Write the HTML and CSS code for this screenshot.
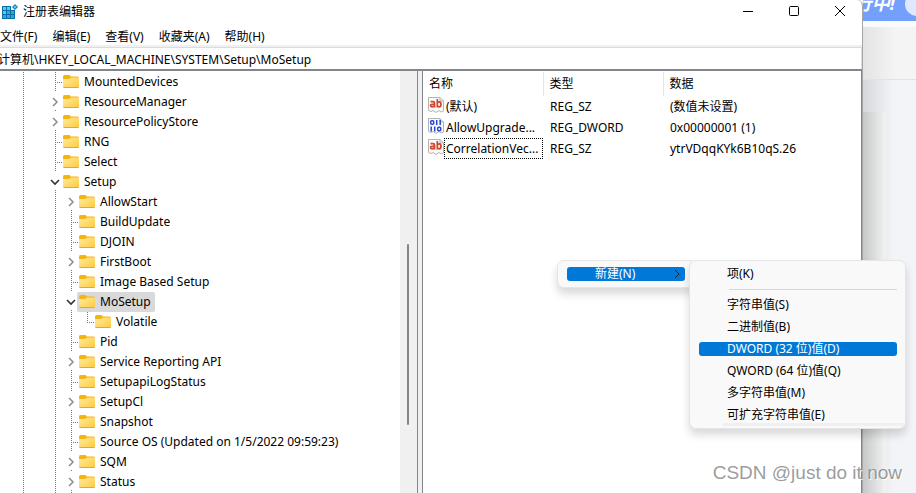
FILE: index.html
```html
<!DOCTYPE html>
<html lang="zh-CN">
<head>
    <meta charset="UTF-8">
    <meta name="viewport" content="width=device-width, initial-scale=1.0">
    <title>注册表编辑器</title>
    <link rel="stylesheet" href="styles.css">
</head>
<body>

    <!-- Shared icons -->
    <svg class="icon-defs" aria-hidden="true">
        <defs>
            <linearGradient id="folder-fill" x1="0" y1="0" x2="1" y2="1">
                <stop offset="0" stop-color="#ffe9a0"/>
                <stop offset="1" stop-color="#ffcb3d"/>
            </linearGradient>
            <symbol id="folder" viewBox="0 0 16 14">
                <path d="M0 1.500 Q0 0 1.500 0 H6 Q7 0 7.500 1 L8 1.500 H14.500 Q16 1.500 16 3 V6 H0 Z" fill="#f5b50f"/>
                <path d="M0 4 H6 L8 2.500 H15 Q16 2.500 16 3.500 V11.500 Q16 13 14.500 13 H1.500 Q0 13 0 11.500 Z" fill="url(#folder-fill)"/>
                <path d="M.5 12.500 H15.500" stroke="#eda912" stroke-width="1"/>
            </symbol>
            <symbol id="closed" viewBox="0 0 8 10">
                <path d="M2 1 L6 5 L2 9" fill="none" stroke="#8c8c8c" stroke-width="1.500"/>
            </symbol>
            <symbol id="opened" viewBox="0 0 10 8">
                <path d="M1 2 L5 6 L9 2" fill="none" stroke="#333" stroke-width="1.600"/>
            </symbol>
            <symbol id="sheet" viewBox="0 0 16 16">
                <path d="M.5 .5 H12 L15.500 4 V14 L13 15 L11 13.500 L8 15.500 L5 13.500 L3 14.500 L.5 13.500 Z" fill="#fafafa" stroke="#b4b4b4"/>
                <path d="M12 .5 V4 H15.500" fill="none" stroke="#b4b4b4"/>
            </symbol>
            <symbol id="string" viewBox="0 0 16 16">
                <use href="#sheet"/>
                <g fill="none" stroke="#d1472b" stroke-width="1.700">
                    <path d="M2.500 4.700 H5 Q6.500 4.700 6.500 6 V10.500 M6.500 7.300 H4 Q2.500 7.300 2.500 8.500 Q2.500 9.800 4 9.800 Q5.500 9.800 6.500 8.700"/>
                    <path d="M9.300 2 V10.500 M9.300 6 Q9.800 4.800 11.200 4.800 Q13 4.800 13 7.300 Q13 9.800 11.200 9.800 Q9.800 9.800 9.300 8.700"/>
                </g>
            </symbol>
            <symbol id="binary" viewBox="0 0 16 16">
                <use href="#sheet"/>
                <g fill="none" stroke="#2747d8" stroke-width="1.500">
                    <rect x="2.700" y="2.700" width="3" height="3.600" rx="1"/>
                    <path d="M8.700 2 V7 M12.200 2 V7 M3.200 8.500 V13.500 M6.700 8.500 V13.500"/>
                    <rect x="9.700" y="9.200" width="3" height="3.600" rx="1"/>
                </g>
            </symbol>
        </defs>
    </svg>

    <div class="desktop">
        <main class="window">
            <header class="title-bar">
                <svg class="app-icon" viewBox="0 0 16 16" aria-hidden="true">
                    <path d="M0 2 H9 V6 H13 V15 H0 Z" fill="#0f6fa8"/>
                    <path d="M1 3 H4 V6 H1 Z M5 3 H8 V6 H5 Z M1 7 H4 V10 H1 Z" fill="#4ccdf5"/>
                    <path d="M5 7 H8 V10 H5 Z M9 7 H12 V10 H9 Z M1 11 H4 V14 H1 Z M5 11 H8 V14 H5 Z M9 11 H12 V14 H9 Z" fill="#26a9de"/>
                    <path d="M13 0 L16 3 L13 6 L10 3 Z" fill="#1683bd"/>
                    <path d="M13 1.500 L14.500 3 L13 4.500 L11.500 3 Z" fill="#58d0f6"/>
                </svg>
                <h1 class="title">注册表编辑器</h1>
                <div class="window-buttons">
                    <button class="window-btn" aria-label="最小化">
                        <svg viewBox="0 0 12 12"><path d="M1 5.500 H11"/></svg>
                    </button>
                    <button class="window-btn" aria-label="最大化">
                        <svg viewBox="0 0 12 12"><rect x="1.500" y=".5" width="9" height="9" rx="1"/></svg>
                    </button>
                    <button class="window-btn" aria-label="关闭">
                        <svg viewBox="0 0 12 12"><path d="M1 0 L11 10 M11 0 L1 10"/></svg>
                    </button>
                </div>
            </header>

            <nav class="menu-bar">
                <button>文件(F)</button>
                <button>编辑(E)</button>
                <button>查看(V)</button>
                <button>收藏夹(A)</button>
                <button>帮助(H)</button>
            </nav>

            <div class="address-bar">
                <input type="text" aria-label="地址" value="计算机\HKEY_LOCAL_MACHINE\SYSTEM\Setup\MoSetup">
            </div>

            <div class="panes">
                <div class="tree-pane">
                    <div class="tree">
                        <ul class="branch">
                            <li>
                                <div class="row"><span class="twig"></span><span class="key"><svg><use href="#folder"/></svg>MountedDevices</span></div>
                            </li>
                            <li>
                                <div class="row"><button class="toggle" aria-label="展开 ResourceManager"><svg><use href="#closed"/></svg></button><span class="key"><svg><use href="#folder"/></svg>ResourceManager</span></div>
                            </li>
                            <li>
                                <div class="row"><button class="toggle" aria-label="展开 ResourcePolicyStore"><svg><use href="#closed"/></svg></button><span class="key"><svg><use href="#folder"/></svg>ResourcePolicyStore</span></div>
                            </li>
                            <li>
                                <div class="row"><span class="twig"></span><span class="key"><svg><use href="#folder"/></svg>RNG</span></div>
                            </li>
                            <li>
                                <div class="row"><span class="twig"></span><span class="key"><svg><use href="#folder"/></svg>Select</span></div>
                            </li>
                            <li>
                                <div class="row"><button class="toggle" aria-label="折叠 Setup"><svg><use href="#opened"/></svg></button><span class="key"><svg><use href="#folder"/></svg>Setup</span></div>
                                <ul>
                                    <li>
                                        <div class="row"><button class="toggle" aria-label="展开 AllowStart"><svg><use href="#closed"/></svg></button><span class="key"><svg><use href="#folder"/></svg>AllowStart</span></div>
                                    </li>
                                    <li>
                                        <div class="row"><span class="twig"></span><span class="key"><svg><use href="#folder"/></svg>BuildUpdate</span></div>
                                    </li>
                                    <li>
                                        <div class="row"><span class="twig"></span><span class="key"><svg><use href="#folder"/></svg>DJOIN</span></div>
                                    </li>
                                    <li>
                                        <div class="row"><button class="toggle" aria-label="展开 FirstBoot"><svg><use href="#closed"/></svg></button><span class="key"><svg><use href="#folder"/></svg>FirstBoot</span></div>
                                    </li>
                                    <li>
                                        <div class="row"><span class="twig"></span><span class="key"><svg><use href="#folder"/></svg>Image Based Setup</span></div>
                                    </li>
                                    <li>
                                        <div class="row"><button class="toggle" aria-label="折叠 MoSetup"><svg><use href="#opened"/></svg></button><span class="key selected"><svg><use href="#folder"/></svg>MoSetup</span></div>
                                        <ul>
                                            <li class="last">
                                                <div class="row"><span class="twig"></span><span class="key"><svg><use href="#folder"/></svg>Volatile</span></div>
                                            </li>
                                        </ul>
                                    </li>
                                    <li>
                                        <div class="row"><span class="twig"></span><span class="key"><svg><use href="#folder"/></svg>Pid</span></div>
                                    </li>
                                    <li>
                                        <div class="row"><button class="toggle" aria-label="展开 Service Reporting API"><svg><use href="#closed"/></svg></button><span class="key"><svg><use href="#folder"/></svg>Service Reporting API</span></div>
                                    </li>
                                    <li>
                                        <div class="row"><span class="twig"></span><span class="key"><svg><use href="#folder"/></svg>SetupapiLogStatus</span></div>
                                    </li>
                                    <li>
                                        <div class="row"><button class="toggle" aria-label="展开 SetupCl"><svg><use href="#closed"/></svg></button><span class="key"><svg><use href="#folder"/></svg>SetupCl</span></div>
                                    </li>
                                    <li>
                                        <div class="row"><span class="twig"></span><span class="key"><svg><use href="#folder"/></svg>Snapshot</span></div>
                                    </li>
                                    <li>
                                        <div class="row"><span class="twig"></span><span class="key"><svg><use href="#folder"/></svg>Source OS (Updated on 1/5/2022 09:59:23)</span></div>
                                    </li>
                                    <li>
                                        <div class="row"><button class="toggle" aria-label="展开 SQM"><svg><use href="#closed"/></svg></button><span class="key"><svg><use href="#folder"/></svg>SQM</span></div>
                                    </li>
                                    <li>
                                        <div class="row"><button class="toggle" aria-label="展开 Status"><svg><use href="#closed"/></svg></button><span class="key"><svg><use href="#folder"/></svg>Status</span></div>
                                    </li>
                                    <li>
                                        <div class="row"><span class="twig"></span></div>
                                    </li>
                                </ul>
                            </li>
                        </ul>
                    </div>
                    <div class="scrollbar"><div class="thumb"></div></div>
                </div>

                <div class="value-pane">
                    <table>
                        <thead>
                            <tr>
                                <th class="col-name">名称</th>
                                <th class="col-type">类型</th>
                                <th>数据</th>
                            </tr>
                        </thead>
                        <tbody>
                            <tr>
                                <td><div class="value-name"><svg><use href="#string"/></svg><span>(默认)</span></div></td>
                                <td>REG_SZ</td>
                                <td>(数值未设置)</td>
                            </tr>
                            <tr>
                                <td><div class="value-name"><svg><use href="#binary"/></svg><span>AllowUpgrade...</span></div></td>
                                <td>REG_DWORD</td>
                                <td>0x00000001 (1)</td>
                            </tr>
                            <tr>
                                <td><div class="value-name"><svg><use href="#string"/></svg><span class="focused">CorrelationVec...</span></div></td>
                                <td>REG_SZ</td>
                                <td>ytrVDqqKYk6B10qS.26</td>
                            </tr>
                        </tbody>
                    </table>
                </div>
            </div>
        </main>

        <!-- Page behind the window -->
        <aside class="backdrop">
            <div class="banner"><span class="banner-text">行中!</span><span class="banner-dot"></span></div>
            <div class="backdrop-head"></div>
            <div class="backdrop-body"><div class="backdrop-card"></div></div>
        </aside>

        <div class="context-menu menu-new">
            <button class="active">新建(N)<svg viewBox="0 0 8 10" aria-hidden="true"><path d="M2 1 L6 5 L2 9"/></svg></button>
        </div>

        <div class="context-menu menu-types">
            <button>项(K)</button>
            <hr>
            <button>字符串值(S)</button>
            <button>二进制值(B)</button>
            <button class="active">DWORD (32 位)值(D)</button>
            <button>QWORD (64 位)值(Q)</button>
            <button>多字符串值(M)</button>
            <button>可扩充字符串值(E)</button>
            <div class="menu-foot"></div>
        </div>

        <div class="watermark">CSDN @just do it now</div>
    </div>

</body>
</html>
```
FILE: styles.css
```css
* {
    box-sizing: border-box;
}
body {
    margin: 0;
    font-family: "Noto Sans", "Noto Sans CJK SC", sans-serif;
    font-size: 12px;
    line-height: 20px;
    color: #000;
    background: #f3f4f7;
}
button, input {
    font: inherit;
    color: inherit;
    border: none;
    background: none;
    padding: 0;
    margin: 0;
}
ul {
    list-style: none;
    margin: 0;
    padding: 0;
}
.icon-defs {
    position: absolute;
    width: 0;
    height: 0;
}
.desktop {
    position: relative;
    display: grid;
    grid-template-columns: 1fr 53px;
    height: 100vh;
    overflow: hidden;
}

/* Window frame */
.window {
    display: flex;
    flex-direction: column;
    min-width: 0;
    min-height: 0;
    background: #fff;
    border-right: 1px solid #a5a6aa;
    border-top-right-radius: 6px;
}
.title-bar {
    display: flex;
    align-items: center;
    height: 24px;
    padding-left: 2px;
}
.app-icon {
    width: 16px;
    height: 16px;
}
.title {
    margin: 0 auto 0 5px;
    font-size: 12px;
    font-weight: normal;
}
.window-buttons {
    display: flex;
}
.window-btn {
    display: flex;
    align-items: center;
    justify-content: center;
    width: 46px;
    height: 24px;
    padding-left: 2px;
}
.window-btn svg {
    width: 12px;
    height: 12px;
    fill: none;
    stroke: #000;
}
.menu-bar {
    display: flex;
    gap: 15px;
    height: 21px;
    padding-top: 3px;
}
.address-bar {
    height: 26px;
    border-top: 2px solid #f0f0f0;
    border-bottom: 2px solid #82858b;
}
.address-bar input {
    display: block;
    width: 100%;
    height: 22px;
    text-indent: -2px;
    border: 1px solid #dcdcdc;
    border-width: 1px 1px 0 0;
}

/* Panes */
.panes {
    display: flex;
    flex: 1;
    min-height: 0;
    background: #f0f0f0;
    border-right: 1px solid #82858b;
}
.tree-pane {
    display: flex;
    width: 418px;
    background: #fff;
    border-right: 1px solid #82858b;
    overflow: hidden;
}
.value-pane {
    flex: 1;
    min-width: 0;
    margin-left: 4px;
    background: #fff;
    border-left: 1px solid #82858b;
}

/* Key tree */
.tree {
    flex: 1;
    padding: 1px 0 0 15px;
    overflow: hidden;
    white-space: nowrap;
}
.tree li, .branch {
    background: repeating-linear-gradient(#777 0 1px, #fff 1px 2px) 8px 0 / 1px 100% no-repeat;
}
.branch {
    padding-left: 32px;
}
.tree li.last {
    background-size: 1px 11px;
}
.tree li > ul {
    padding-left: 16px;
}
.row {
    display: flex;
    height: 20px;
}
.twig {
    width: 16px;
    background: repeating-linear-gradient(90deg, #777 0 1px, #fff 1px 2px) 8px 10px / 7px 1px no-repeat;
}
.toggle {
    display: flex;
    align-items: center;
    justify-content: center;
    width: 16px;
    height: 18px;
    padding-top: 2px;
    background: #fff;
}
.toggle svg {
    width: 10px;
    height: 10px;
}
.key {
    display: flex;
    align-items: center;
    gap: 5px;
    margin-left: -2px;
    padding: 0 4px 0 2px;
}
.key svg {
    width: 16px;
    height: 14px;
}
.selected {
    background: #d9d9d9;
    border-radius: 2px;
}
.scrollbar {
    width: 17px;
    padding: 173px 8px 0 7px;
    background: #f0f0f0;
}
.thumb {
    height: 181px;
    background: #868686;
    border-radius: 1px;
}

/* Value list */
table {
    width: 100%;
    margin-top: 1px;
    table-layout: fixed;
    border-collapse: collapse;
    text-align: left;
    white-space: nowrap;
}
th {
    height: 24px;
    padding: 0 0 0 6px;
    font-weight: normal;
    border-right: 1px solid #e5e5e5;
}
th:last-child {
    border-right: none;
}
.col-name {
    width: 120px;
}
.col-type {
    width: 120px;
}
td {
    height: 21px;
    padding: 0 0 0 7px;
}
.value-name {
    display: flex;
    align-items: flex-start;
    margin-left: -2px;
}
.value-name svg {
    width: 16px;
    height: 16px;
    margin-top: 1px;
}
.value-name span {
    flex: 1;
    padding-left: 1px;
    border: 1px solid transparent;
    line-height: 19px;
}
.value-name .focused {
    border: 1px dotted #000;
}

/* Page behind the window */
.backdrop {
    display: flex;
    flex-direction: column;
    min-height: 0;
    overflow: hidden;
}
.banner {
    display: flex;
    justify-content: flex-end;
    height: 21px;
    background: #73a0fb;
    overflow: hidden;
}
.banner-text {
    flex: none;
    font-size: 18px;
    font-style: italic;
    font-weight: bold;
    line-height: 6px;
    white-space: nowrap;
    color: #fff;
}
.banner-dot {
    flex: none;
    width: 24px;
    height: 24px;
    margin: -8px -13px 0 10px;
    border-radius: 50%;
    background: #dfe8ff;
}
.backdrop-head {
    height: 59px;
    border-top: 6px solid #fbfbfb;
    border-bottom: 1px solid #e2e2e2;
    background: linear-gradient(90deg, #e3e3e3, #f4f4f4 32px);
}
.backdrop-body {
    flex: 1;
    padding-top: 32px;
    background: linear-gradient(90deg, #d5d7da, #f3f4f7 30px);
}
.backdrop-card {
    width: 23px;
    height: 100%;
    background: linear-gradient(90deg, #c6c7c8, #f3f3f3);
}

/* Context menus */
.context-menu {
    position: absolute;
    top: 260px;
    display: flex;
    flex-direction: column;
    background: #f9f9f9;
    border: 1px solid #e5e5e5;
    border-radius: 7px;
    box-shadow: 0 6px 8px rgba(0, 0, 0, 0.15);
}
.context-menu button {
    display: flex;
    align-items: center;
    height: 14px;
    padding-left: 28px;
    margin: 4px 0;
    border-radius: 3px;
    line-height: 14px;
    text-align: left;
    white-space: nowrap;
}
.context-menu .active {
    background: #0078d7;
    color: #fff;
}
.context-menu hr {
    width: auto;
    height: 1px;
    margin: 4px 0 4px 30px;
    border: none;
    background: #d7d7d7;
}
.menu-new {
    left: 557px;
    width: 140px;
    padding: 2px 11px 2px 9px;
}
.menu-new svg {
    width: 8px;
    height: 10px;
    margin: 0 4px 0 auto;
    fill: none;
    stroke: #222;
}
.menu-types {
    left: 689px;
    width: 217px;
    padding: 2px 8px 2px 9px;
}
.menu-foot {
    height: 3px;
    margin: -3px -8px 0 24px;
    background: #f0f0f0;
}

.watermark {
    position: absolute;
    right: 14px;
    bottom: 8px;
    font-family: "Liberation Sans", Arial, sans-serif;
    font-size: 19px;
    line-height: 24px;
    color: rgba(130, 130, 130, 0.8);
    text-shadow: 1px 1px 0 rgba(255, 255, 255, 0.8);
}
```
